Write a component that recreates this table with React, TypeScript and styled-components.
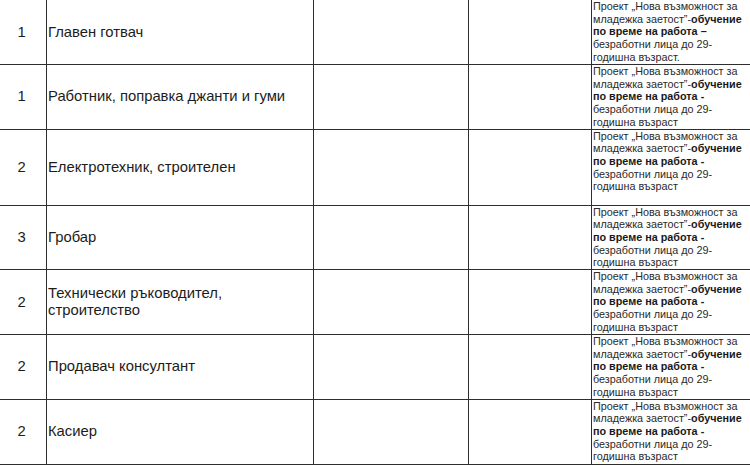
import React from "react";
import styled, { createGlobalStyle } from "styled-components";

const GlobalStyle = createGlobalStyle`
  html, body {
    margin: 0;
    padding: 0;
    background: #ffffff;
    overflow: hidden;
  }
  body {
    font-family: "Liberation Sans", Arial, sans-serif;
    color: #1c1c1c;
  }
`;

const Viewport = styled.div`
  width: 750px;
  height: 465px;
  overflow: hidden;
`;

const Table = styled.table`
  border-collapse: collapse;
  table-layout: fixed;
  width: 774px;
  margin: -1px 0 0 -4px;
`;

const Col = styled.col<{ $w: number }>`
  width: ${(p) => p.$w}px;
`;

const Row = styled.tr<{ $h: number }>`
  height: ${(p) => p.$h}px;
`;

const Cell = styled.td`
  border: 1px solid #2e2e2e;
  padding: 0;
  vertical-align: middle;
`;

const NumCell = styled(Cell)`
  text-align: center;
  font-size: 14.8px;
  line-height: 17px;
`;

const NameCell = styled(Cell)`
  padding-left: 1px;
  font-size: 14.8px;
  line-height: 17px;
`;

const NoteCell = styled(Cell)`
  padding: 0 0 0 1px;
  font-size: 10.8px;
  line-height: 12.7px;
  vertical-align: top;
  white-space: nowrap;
  color: #2a2a2a;
`;

const Bold = styled.b`
  font-weight: bold;
  color: #1a1a1a;
`;

type Item = { n?: number; name: string[]; h: number; first?: boolean; blank?: boolean };

const items: Item[] = [
  { n: 1, name: ["Главен готвач"], h: 65, first: true },
  { n: 1, name: ["Работник, поправка джанти и гуми"], h: 63 },
  { n: 2, name: ["Електротехник, строителен"], h: 76 },
  { n: 3, name: ["Гробар"], h: 64 },
  { n: 2, name: ["Технически ръководител,", "строителство"], h: 65 },
  { n: 2, name: ["Продавач консултант"], h: 64 },
  { n: 2, name: ["Касиер"], h: 65 },
  { name: [], h: 40, blank: true },
];

const Note: React.FC<{ first?: boolean }> = ({ first }) => (
  <>
    Проект „Нова възможност за
    <br />
    младежка заетост”-<Bold>обучение</Bold>
    <br />
    <Bold>по време на работа {first ? "–" : "-"}</Bold>
    <br />
    безработни лица до 29-
    <br />
    годишна възраст{first ? "." : ""}
  </>
);

export default function App() {
  return (
    <Viewport>
      <GlobalStyle />
      <Table>
        <colgroup>
          <Col $w={50} />
          <Col $w={267} />
          <Col $w={155} />
          <Col $w={123} />
          <Col $w={179} />
        </colgroup>
        <tbody>
          {items.map((it, i) => (
            <Row key={i} $h={it.h}>
              <NumCell>{it.n}</NumCell>
              <NameCell>
                {it.name.map((l, j) => (
                  <React.Fragment key={j}>
                    {j > 0 && <br />}
                    {l}
                  </React.Fragment>
                ))}
              </NameCell>
              <Cell />
              <Cell />
              <NoteCell>{!it.blank && <Note first={it.first} />}</NoteCell>
            </Row>
          ))}
        </tbody>
      </Table>
    </Viewport>
  );
}
